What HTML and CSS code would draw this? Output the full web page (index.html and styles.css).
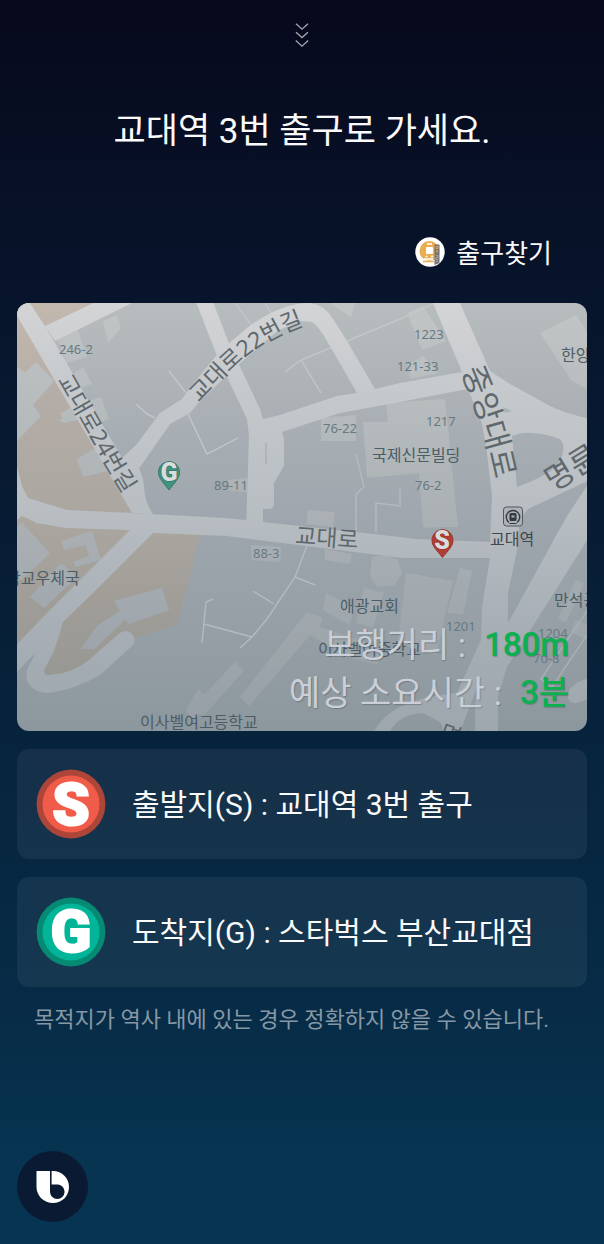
FILE: index.html
```html
<!DOCTYPE html>
<html lang="ko">
<head>
<meta charset="utf-8">
<meta name="viewport" content="width=device-width, initial-scale=1">
<title>출구찾기</title>
<link rel="stylesheet" href="styles.css">
</head>
<body>
<main class="screen">
  <button class="handle" type="button" aria-label="내리기">
    <svg width="14" height="24" viewBox="0 0 14 24"><path d="M1 .8 7 6.2 13 .8M1 9.2 7 14.6 13 9.2M.8 17.6 7 23.2 13.2 17.6"/></svg>
  </button>
  <h1 class="title">교대역 3번 출구로 가세요.</h1>

  <button class="service" type="button">
    <svg width="30" height="30" viewBox="0 0 30 30" aria-hidden="true">
      <circle cx="15" cy="15" r="14.7" fill="#fff"/>
      <circle cx="14.500" cy="14" r="10" fill="#e9ae51"/>
      <path d="M9 5.500h10v14H9z" fill="#e9ae51"/>
      <path d="M12 7h5M7 24.500h13M9 22h9" stroke="#fff" stroke-width="1.300"/>
      <path d="M8 24.500h11" stroke="#e9ae51" stroke-width="1.600"/>
      <rect x="11" y="10" width="7" height="7" rx="1" fill="#fff"/>
      <path d="M10.500 19.500h2M16 19.500h2" stroke="#fff" stroke-width="1.500"/>
      <path d="M19.500 7.500h5v18.500l-5 2z" fill="#777276"/>
      <path d="M21 9.500h2v2h-2zM21 14h2M22 13v3" stroke="#dba44f" fill="none"/>
      <path d="M21 18.500h2v2h-2v2h2M21 24.500h2" stroke="#a5a2a5" fill="none"/>
    </svg>
    <span>출구찾기</span>
  </button>

  <section class="map-card" aria-label="지도">
    <svg class="map" viewBox="17 303 570 428" preserveAspectRatio="xMidYMid slice" role="img" aria-label="교대역 주변 지도">
      <defs>
        <linearGradient id="ground" gradientUnits="userSpaceOnUse" x1="0" y1="303" x2="0" y2="731">
          <stop offset="0" stop-color="#b7bcbe"/><stop offset=".23" stop-color="#abb1b5"/><stop offset=".47" stop-color="#a0a7ae"/><stop offset=".7" stop-color="#98a1a8"/><stop offset="1" stop-color="#8d979e"/>
        </linearGradient>
        <linearGradient id="road" gradientUnits="userSpaceOnUse" x1="0" y1="303" x2="0" y2="731">
          <stop offset="0" stop-color="#d3d4d6"/><stop offset=".23" stop-color="#c4c8cb"/><stop offset=".5" stop-color="#b7bdc1"/><stop offset=".74" stop-color="#a8afb6"/><stop offset="1" stop-color="#9ea7ad"/>
        </linearGradient>
        <linearGradient id="zone" gradientUnits="userSpaceOnUse" x1="0" y1="303" x2="0" y2="731">
          <stop offset="0" stop-color="#c3b8ae"/><stop offset=".23" stop-color="#b4ada7"/><stop offset=".5" stop-color="#aba6a0"/><stop offset=".7" stop-color="#a09d98"/><stop offset="1" stop-color="#929490"/>
        </linearGradient>
        <linearGradient id="block" gradientUnits="userSpaceOnUse" x1="0" y1="303" x2="0" y2="731">
          <stop offset="0" stop-color="#c2c5c6"/><stop offset=".3" stop-color="#b4b9bb"/><stop offset=".5" stop-color="#abb0b4"/><stop offset=".74" stop-color="#a0a8ad"/><stop offset="1" stop-color="#969fa6"/>
        </linearGradient>
        <path id="way22" d="M199 403C221 381 243 355 268 342C282 334 294 328 312 323"/>
        <path id="way24" d="M57 380 94 445C103 461 112 475 123 493"/>
        <path id="wayMain" d="M461 371C476 405 487 440 496 485"/>
        <path id="wayRight" d="M553 492 618 452"/>
      </defs>
      <path fill="url(#ground)" d="M0 290H620V750H0z"/>
      <path fill="url(#zone)" d="M0 303H93L45 326 132 513 210 530 200 536 177 625 137 637 100 670 50 690 40 655H0z"/>
      <g fill="url(#block)">
        <path d="M16 366 25 373 36 362 54 381 33 405 41 416 16 442zM16 527 22 523 50 553 22 580 16 578zM61 541 92 531 101 560 76 567 73 562 89 556 86 545 64 550zM61 563 77 577 44 608 30 597zM114 601 162 588 169 610 129 624 125 620 94 649H81L90 636 98 625 120 611zM58 421 80 411 90 417 64 423 57 419zM77 459 101 445 113 470 83 477z"/>
        <path d="M103 321 117 315 121 328 108 343zM57 339 78 330 87 357 66 363zM66 379 83 367 92 384 73 390zM83 403 101 397 109 419 94 425zM60 414 79 402 87 412 64 423zM228 480 247 478 248 492 230 491z"/>
        <path d="M330 303H355L351 317zM407 313 423 306 446 341 422 350zM409 364 423 356 438 373 410 379zM386 403 445 399 458 527H423L419 473 367 478 363 422H388zM321 418 356 415V441H321zM540 333 576 315 587 332V389L571 380z"/>
        <path d="M308 510 335 512 333 527 306 524zM325 549 352 554 350 564 325 560zM251 545 281 547 280 562 252 560zM372 557 387 555 398 560 402 573 395 585 377 587 370 576zM406 573 453 581 436 655 398 643zM460 568 472 571 463 614 447 613zM364 588 384 593 373 627 356 623zM326 593 355 608 349 625 323 610zM240 697 307 612 323 618 319 627 344 635 382 648 377 665 349 657 310 635 249 706zM424 518 457 516 458 526 426 528z"/>
        <path d="M235 662 244 671 203 716 187 708 197 691 203 696zM186 710 199 690 210 700 198 716 191 718zM576 580 584 584 566 622 558 619zM575 620 587 624V640L571 632z"/>
      </g>
      <g fill="none" stroke="#c2c7ca" stroke-width="1.400">
        <path d="M235 303 252 326M265 303 272 314M285 372 301 360 400 319 433 304M301 360 321 393M169 371 186 393M136 404 147 414 155 418M188 414 207 454 238 438"/>
        <path stroke="#b4babf" d="M356 454 364 487 356 494V535M376 532V503L400 506V488M308 543 295 577 267 619 252 637 240 648M295 577 315 585M253 591 274 604M252 637 204 624M202 643 206 602 213 599"/>
        <path stroke="#a9b0b5" d="M587 611 541 679 552 687 587 635"/>
      </g>
      <g fill="url(#road)">
        <path d="M0 286 16 314 132 513 153 514C143 499 145 490 143 479L139 468 143 463 170 424 190 413 200 401 237 366 277 331 300 321 312 322Q318 325 330 346L357 393 337 396 280 415 263 419 260 409 230 346 210 294H193L217 356 247 419 249 436 246 530H263V509H270Q274 508 274 503V483L284 466V439L282 432 340 413 373 407 400 402 468 389 462 372 400 383 375 389 347 341 333 319Q325 305 310 303 280 303 247 328L220 351 190 388 182 399 160 413 137 444 122 458 45 326 93 303 110 290H150L132 303 55 341 45 326 30 303 20 290z"/>
        <path d="M0 450 17 466 22 486 28 498 67 510 132 513 225 518 245 520 263 522 400 537 415 539 490 542 492 496 487 453 482 423 468 389 462 372 433 303V290H456L460 303 490 371 510 384 550 406Q565 414 600 421V475L528 509 520 519 517 550 508 593V623L567 516 587 486 600 500V520L507 667 498 697V740H475V705L481 677 457 740H440Q446 730 440 722L423 713Q400 714 390 731L370 740Q378 718 400 707 426 695 457 693L481 640 482 607 490 558H403L227 536 153 533 93 593 63 622 60 633 53 653 44 670Q43 676 49 675L63 673Q82 669 100 650L120 633C130 627 138 639 133 645L100 675Q76 689 50 693C31 693 24 681 27 670L36 652 0 690V662L47 613 130 530 65 528 37 523 22 516 0 533z"/>
        <path d="M600 674 578 682Q566 690 568 698 571 706 583 701L600 690z"/>
      </g>
      <path fill="url(#ground)" d="M512 436Q530 428 560 439 568 448 557 466 543 478 517 487zM503 407 512 411 505 413z"/>
      <path fill="url(#zone)" d="M30 303H93L45 326z"/>
      <path stroke="#9da5a9" d="M266 443V464"/>

      <g class="num">
        <text x="59" y="354">246-2</text><text x="414" y="339">1223</text><text x="397" y="371">121-33</text><text x="426" y="426">1217</text><text x="323" y="433">76-22</text><text x="415" y="490">76-2</text><text x="214" y="490">89-11</text><text x="253" y="558">88-3</text><text x="446" y="631">1201</text><text x="538" y="638">1204</text><text x="533" y="663">70-8</text>
      </g>
      <g class="place">
        <text x="372" y="461">국제신문빌딩</text><text x="561" y="361">한양</text><text x="6" y="584">학교우체국</text><text x="340" y="612">애광교회</text><text x="318" y="655">이사벨여중학교</text><text x="140" y="728">이사벨여고등학교</text><text x="554" y="606">만석공</text>
      </g>
      <g class="street">
        <text class="street-sm"><textPath href="#way22">교대로22번길</textPath></text>
        <text class="street-sm"><textPath href="#way24">교대로24번길</textPath></text>
        <text class="street-sm" transform="rotate(4 326 540)" x="295" y="546">교대로</text>
        <text class="street-lg"><textPath href="#wayMain">중앙대로</textPath></text>
        <text class="street-lg"><textPath href="#wayRight">명륜로</textPath></text>
        <text class="street-sm" transform="rotate(20 440 740)" x="438" y="740">명륜</text>
      </g>

      <rect x="503.500" y="507" width="19" height="19" rx="3" fill="#adb3b6" stroke="#51575c"/>
      <path d="M509 522.500A6.700 6.700 0 1 1 517 522.500" fill="none" stroke="#343a40" stroke-width="1.400"/>
      <rect x="509.500" y="513" width="7" height="8" rx="1.500" fill="#343a40"/>
      <path d="M511.500 515.500h3v2h-3z" fill="#b0b6ba"/>
      <path d="M509.500 523.500h7" stroke="#343a40" stroke-width="1.200"/>
      <text class="station" x="490" y="545">교대역</text>

      <path d="M169 462C162 462 158.500 467 158.500 472.500 158.500 478 163 482 169 490 175 482 179.500 478 179.500 472.500 179.500 467 176 462 169 462z" fill="#429481" stroke="#2f7768"/>
      <text class="pin pin-goal" x="169" y="481">G</text>
      <path d="M442.500 530C435.500 530 432 535 432 540.500 432 546 436.500 550 442.500 557.500 448.500 550 453 546 453 540.500 453 535 449.500 530 442.500 530z" fill="#b03f37" stroke="#9c342e"/>
      <text class="pin pin-start" x="442" y="549">S</text>
    </svg>
    <dl class="stats">
      <div class="stat"><dt>보행거리 :</dt><dd>180m</dd></div>
      <div class="stat"><dt>예상 소요시간 :</dt><dd>3분</dd></div>
    </dl>
  </section>

  <div class="stops">
    <button class="stop" type="button">
      <svg width="70" height="70" viewBox="0 0 70 70" aria-hidden="true">
        <circle cx="35" cy="35" r="34.400" fill="#ae4539"/><circle cx="35" cy="35" r="28.500" fill="#f15c4a"/>
        <text class="badge" x="35" y="56">S</text>
      </svg>
      <span class="stop-name">출발지(S) : 교대역 3번 출구</span>
    </button>
    <button class="stop" type="button">
      <svg width="70" height="70" viewBox="0 0 70 70" aria-hidden="true">
        <circle cx="35" cy="35" r="34.400" fill="#068a74"/><circle cx="35" cy="35" r="28.500" fill="#02b598"/>
        <text class="badge" x="35" y="55">G</text>
      </svg>
      <span class="stop-name">도착지(G) : 스타벅스 부산교대점</span>
    </button>
  </div>
  <p class="note">목적지가 역사 내에 있는 경우 정확하지 않을 수 있습니다.</p>

  <button class="assistant" type="button" aria-label="음성 비서">
    <svg width="34" height="32" viewBox="0 0 34 32">
      <path fill="#fff" d="M.5 0H17C26 0 33 7 33 16S26 32 17 32 .5 25 .5 16z"/>
      <path fill="#0a1a33" d="M14 0h1.600v13.400H22A7.300 7.300 0 1 1 14 21z"/>
    </svg>
  </button>
</main>
</body>
</html>
```
FILE: styles.css
```css
* {
  box-sizing: border-box;
}

body {
  margin: 0;
  min-height: 100vh;
  font-family: Roboto, "Noto Sans CJK KR", sans-serif;
  color: #fafafa;
  background: linear-gradient(#07091c 0%, #07142b 23%, #07243d 60%, #072c47 82%, #063451 93%, #063451 100%);
}

button {
  margin: 0;
  padding: 0;
  border: 0;
  background: none;
  font: inherit;
  color: inherit;
}

svg {
  display: block;
}

.screen {
  display: flex;
  flex-direction: column;
  min-height: 100vh;
  padding: 23px 17px 22px;
}

.handle {
  align-self: center;
}

.handle path {
  fill: none;
  stroke: #a3a5ac;
  stroke-width: 1.3;
}

.title {
  margin: 59px 0 0;
  font-size: 35px;
  font-weight: 400;
  line-height: 52px;
  text-align: center;
}

.service {
  display: flex;
  align-items: center;
  align-self: flex-end;
  gap: 11px;
  margin: 72px 35px 0 0;
  font-size: 26px;
  line-height: 40px;
}

.service span {
  padding-top: 4px;
}

.map-card {
  display: grid;
  margin-top: 29px;
  overflow: hidden;
  border-radius: 12px;
}

.map {
  grid-area: 1 / 1;
  width: 100%;
  height: auto;
}

.stats {
  grid-area: 1 / 1;
  align-self: end;
  margin: 0;
  padding: 0 18px 14px;
  font-size: 34px;
  line-height: 48px;
  text-shadow: 1px 1px 1px rgba(60, 70, 80, 0.35);
}

.stat {
  display: flex;
  justify-content: flex-end;
  gap: 18px;
  color: #cacfd8;
}

.stat dd {
  margin: 0;
  font-size: 33px;
  font-weight: 500;
  color: #0bb04f;
}

.num {
  fill: #667a82;
  font: 13px "Noto Sans", sans-serif;
}

.place,
.station {
  fill: #4b5d66;
  font: 16px "Noto Sans CJK KR", sans-serif;
}

.station {
  fill: #3f464c;
}

.street {
  fill: #5f686d;
  font-family: "Noto Sans", "Noto Sans CJK KR", sans-serif;
}

.street-sm {
  font-size: 23px;
}

.street-lg {
  font-size: 31px;
}

.pin {
  fill: #d9dcdc;
  font: 900 25px Roboto, sans-serif;
  text-anchor: middle;
  paint-order: stroke;
  stroke-width: 1.5;
}

.pin-goal {
  stroke: #2f7768;
}

.pin-start {
  stroke: #9c342e;
}

.stops {
  display: grid;
  gap: 18px;
  margin-top: 18px;
}

.stop {
  display: flex;
  align-items: center;
  gap: 26px;
  min-height: 110px;
  padding: 0 19px;
  border-radius: 12px;
  background: rgba(255, 255, 255, 0.06);
  font-size: 30px;
  text-align: left;
}

.stop-name {
  padding-bottom: 4px;
}

.badge {
  fill: #fff;
  stroke: #fff;
  stroke-width: 2;
  font: 900 60px Roboto, sans-serif;
  text-anchor: middle;
}

.note {
  margin: 17px 17px 0;
  font-size: 22px;
  line-height: 32px;
  color: #8798a5;
}

.assistant {
  display: flex;
  align-items: center;
  justify-content: center;
  width: 71px;
  height: 71px;
  margin-top: auto;
  border-radius: 50%;
  background: #0a1a33;
}
```
